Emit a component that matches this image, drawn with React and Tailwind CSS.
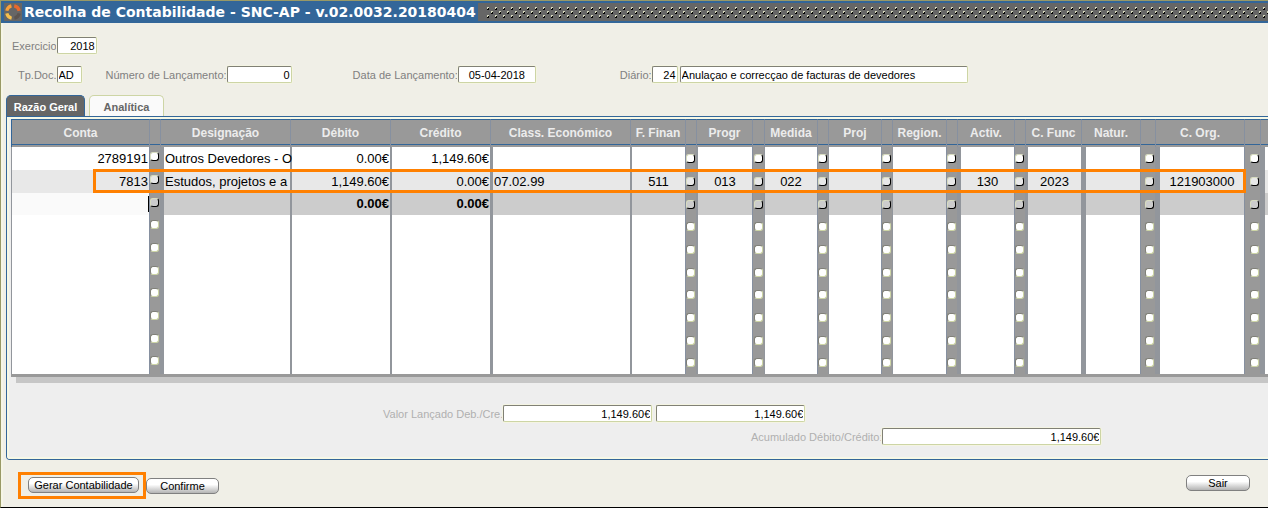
import React from "react";

const inputBase =
  "h-[17px] min-w-0 rounded-[2px] border border-t-[#808075] border-l-[#808075] border-b-[#cdd5a5] border-r-[#cdd5a5] bg-white px-px text-[11px] leading-[15px] text-black outline-none shadow-[0_0_0_1px_#f4f4e2]";

function Field({ label, id, value, className, labelClass = "text-[#808080]" }) {
  return (
    <div className="flex items-center">
      <label htmlFor={id} className={`whitespace-nowrap text-[11px] leading-4 ${labelClass}`}>
        {label}
      </label>
      <input id={id} defaultValue={value} className={`${inputBase} ${className}`} />
    </div>
  );
}

const columns = [
  { key: "conta", title: "Conta", col: "w-[138px]", edge: "border-l", align: "text-right", pick: "w-[11px]", raised: true },
  { key: "desig", title: "Designação", col: "w-[130px]", edge: "border-l-4", align: "text-left" },
  { key: "deb", title: "Débito", col: "w-[100px]", edge: "border-l-2", align: "text-right" },
  { key: "cred", title: "Crédito", col: "w-[100px]", edge: "border-l-2", align: "text-right" },
  { key: "cls", title: "Class. Económico", col: "w-[140px]", edge: "border-l-3", align: "text-left" },
  { key: "fin", title: "F. Finan", col: "w-[55px]", edge: "border-l-2", align: "text-center", pick: "w-[11px]" },
  { key: "progr", title: "Progr", col: "w-[56px]", edge: "border-l-2", align: "text-center", pick: "w-[12px]" },
  { key: "med", title: "Medida", col: "w-[53px]", edge: "border-l", align: "text-center", pick: "w-[11px]" },
  { key: "proj", title: "Proj", col: "w-[53px]", edge: "border-l", align: "text-center", pick: "w-[11px]" },
  { key: "reg", title: "Region.", col: "w-[54px]", edge: "border-l", align: "text-center", pick: "w-[11px]" },
  { key: "act", title: "Activ.", col: "w-[57px]", edge: "border-l-4", align: "text-center", pick: "w-[11px]" },
  { key: "func", title: "C. Func", col: "w-[56px]", edge: "border-l-3", align: "text-center" },
  { key: "nat", title: "Natur.", col: "w-[59px]", edge: "border-l-5", align: "text-center", pick: "w-[15px]" },
  { key: "org", title: "C. Org.", col: "w-[89px]", edge: "border-l-5", align: "text-center", pick: "w-[16px]" },
  { key: "end", title: "", col: "", edge: "border-l-5", align: "text-left" },
];

const rows = [
  { conta: "2789191", desig: "Outros Devedores - O", deb: "0.00€", cred: "1,149.60€" },
  {
    conta: "7813", desig: "Estudos, projetos e a", deb: "1,149.60€", cred: "0.00€", cls: "07.02.99",
    fin: "511", progr: "013", med: "022", act: "130", func: "2023", org: "121903000",
  },
  { deb: "0.00€", cred: "0.00€" },
  {}, {}, {}, {}, {}, {}, {},
];

const rowColors = ["bg-white", "bg-[#e8e8e8]", "bg-[#cccccc]"];

function PickButton({ row, label }) {
  const look =
    row > 2
      ? "border-t-[#808078] border-l-[#808078] border-b-[#cdd5a5] border-r-[#cdd5a5] bg-white"
      : `border-t-[#d8dcc0] border-l-[#d8dcc0] border-b-black border-r-black ${rowColors[row]}`;
  return <button aria-label={label} className={`block size-[9px] rounded-[3px] border ${look}`} />;
}

function LedgerTable() {
  return (
    <table className="w-full min-w-[1257px] table-fixed border-separate border-spacing-0 bg-[#999999]">
      <colgroup>
        {columns.map((c) => (
          <React.Fragment key={c.key}>
            <col className={c.col} />
            {c.pick && <col className={c.pick} />}
          </React.Fragment>
        ))}
      </colgroup>
      <thead>
        <tr className="h-[28px]">
          {columns.map((c, i) => (
            <React.Fragment key={c.key}>
              <th
                className={`h-[28px] overflow-hidden border-t border-t-[#336699] border-l p-0 align-top text-[12px] font-bold text-[#ececec] ${i === 0 ? "border-l-[#336699]" : "border-l-[#8690a0]"}`}
              >
                <div className="h-[25px] border-b border-[#336699] whitespace-nowrap leading-[26px]">{c.title}</div>
              </th>
              {c.pick && (
                <td className="border-t border-t-[#336699] border-l border-l-[#8690a0] p-0 align-top">
                  <div className="h-[25px] border-b border-[#336699]" />
                </td>
              )}
            </React.Fragment>
          ))}
        </tr>
      </thead>
      <tbody>
        {rows.map((r, i) => (
          <tr key={i} className="h-[23px] nth-[3n]:h-[22px]">
            {columns.map((c, j) => {
              const bg = i === 2 && j === 0 ? "bg-[#fafafa]" : rowColors[i] || "bg-white";
              const caret = i === 2 && j === 0;
              return (
                <React.Fragment key={c.key}>
                  <td
                    className={`border-[#92969c] p-0 whitespace-nowrap text-[13px] text-black ${c.edge} ${c.align} ${bg} ${i === 2 ? "font-bold" : ""}`}
                  >
                    <div className={`h-4 px-px leading-4 ${caret ? "border-r border-black" : ""}`}>{r[c.key]}</div>
                  </td>
                  {c.pick && (
                    <td className={`border-l border-[#8690a0] p-0 pr-px ${c.raised ? "pb-1" : ""}`}>
                      <div className="flex justify-end">
                        <PickButton row={i} label={`${c.title} ${i + 1}`} />
                      </div>
                    </td>
                  )}
                </React.Fragment>
              );
            })}
          </tr>
        ))}
      </tbody>
    </table>
  );
}

function ActionButton({ children, className }) {
  return (
    <button
      className={`h-4 rounded-[5px] border border-[#808080] bg-linear-to-b from-white from-40% to-[#b4b4b4] text-[11px] leading-[15px] text-black ${className}`}
    >
      {children}
    </button>
  );
}

function Logo() {
  return (
    <svg viewBox="0 0 18 18" className="size-[18px] shrink-0" aria-hidden="true">
      <rect width="18" height="18" fill="#666666" />
      <g fill="none" strokeWidth="3.2">
        <path d="M2.8 7.8A6.3 6.3 0 0 1 7.4 2.9" stroke="#f7a03a" />
        <path d="M10.2 2.9A6.3 6.3 0 0 1 15.2 7.8" stroke="#e8682c" />
        <path d="M2.8 10.4A6.3 6.3 0 0 0 7.6 15.2" stroke="#f6c04c" />
        <path d="M10.4 15.2A6.3 6.3 0 0 0 15.2 10.4" stroke="#5c5450" />
      </g>
    </svg>
  );
}

export default function App() {
  return (
    <div
      className="flex min-h-[508px] flex-col overflow-hidden border-t border-b border-l border-t-[#999966] border-b-black border-l-[#999966] bg-[#f0efe7]"
      style={{ fontFamily: '"Liberation Sans", Arial, sans-serif' }}
    >
      <header className="flex h-[22px] items-center bg-[#336699] pl-[3px]">
        <Logo />
        <h1
          className="px-0.5 text-[14px] leading-[22px] font-bold whitespace-nowrap text-white"
          style={{ fontFamily: 'Verdana, "DejaVu Sans", sans-serif' }}
        >
          Recolha de Contabilidade - SNC-AP - v.02.0032.20180404
        </h1>
        <div className="h-[18px] flex-1 bg-[#666666] pl-2">
          <svg className="block h-[18px] w-full" aria-hidden="true">
            <defs>
              <pattern id="grip" width="8" height="8" patternUnits="userSpaceOnUse" y="4">
                <path d="M1 0h2v1h-1v1h-1zM5 4h2v1h-1v1h-1z" fill="#d6d8be" />
                <path d="M3 1v2h-2v-1h1v-1zM7 5v2h-2v-1h1v-1z" fill="#000000" />
              </pattern>
            </defs>
            <rect y="4" width="100%" height="11" fill="url(#grip)" />
          </svg>
        </div>
      </header>

      <main className="flex flex-1 flex-col border-l-2 border-[#f6f6e6] pl-[3px]">
        <form className="pt-[14px]">
          <div className="pl-1.5">
            <Field label="Exercicio" id="exercicio" value="2018" className="w-[40px] text-right" />
          </div>
          <div className="flex items-center pt-3 pl-3">
            <Field label="Tp.Doc." id="tpdoc" value="AD" className="w-[25px]" />
            <div className="pl-6">
              <Field label="Número de Lançamento:" id="numero" value="0" className="w-[65px] text-right" />
            </div>
            <div className="pl-[61px]">
              <Field label="Data de Lançamento:" id="data" value="05-04-2018" className="w-[78px] text-center" />
            </div>
            <div className="flex items-center gap-0.5 pl-[84px]">
              <Field label="Diário:" id="diario" value="24" className="w-[26px] text-right" />
              <input
                aria-label="Descrição do diário"
                defaultValue="Anulaçao e correcçao de facturas de devedores"
                className={`${inputBase} w-[288px]`}
              />
            </div>
          </div>
        </form>

        <nav role="tablist" className="flex gap-1 pt-3">
          <button
            role="tab"
            aria-selected="true"
            className="h-[21px] w-[79px] rounded-t-[5px] border border-b-0 border-[#336699] bg-[#666666] text-[11px] leading-[22px] font-bold text-white"
          >
            Razão Geral
          </button>
          <button
            role="tab"
            aria-selected="false"
            className="h-[21px] w-[75px] rounded-t-[5px] border border-b-0 border-[#cdd5a5] bg-[#fafafa] text-[11px] leading-[22px] font-bold text-[#666666]"
          >
            Analítica
          </button>
        </nav>

        <section className="rounded-bl-[4px] border-t border-b border-l border-[#336699] bg-[#eeeeee]">
          <div className="rounded-bl-[3px] border-t-2 border-b-2 border-l-2 border-[#f6f8e6] pl-0.5">
            <div className="relative">
              <LedgerTable />
              <div className="h-[3px] bg-[#999999]" />
              <div className="ml-[5px] h-[6px] bg-[#c6c6c6]" />
              <div className="pointer-events-none absolute top-[50px] left-[82px] h-[24px] w-[1153px] border-3 border-[#ff8000]" />
            </div>
            <div className="flex items-center gap-1 pt-[22px] pl-[372px]">
              <Field label="Valor Lançado Deb./Cre." id="valor-deb" value="1,149.60€" className="w-[149px] text-right" labelClass="text-[#b0b0b0]" />
              <input aria-label="Valor lançado a crédito" defaultValue="1,149.60€" className={`${inputBase} w-[149px] text-right`} />
            </div>
            <div className="flex pt-1.5 pb-3 pl-[740px]">
              <Field label="Acumulado Débito/Crédito:" id="acumulado" value="1,149.60€" className="w-[219px] text-right" labelClass="text-[#b0b0b0]" />
            </div>
          </div>
        </section>

        <footer className="flex items-start justify-between pt-3 pr-[18px] pb-1 pl-3">
          <div className="flex items-center">
            <div className="flex border-3 border-[#ff8000] pt-0.5 pr-1 pb-[3px] pl-[7px]">
              <ActionButton className="w-[111px]">Gerar Contabilidade</ActionButton>
            </div>
            <ActionButton className="w-[73px]">Confirme</ActionButton>
          </div>
          <div className="flex pt-[3px]">
            <ActionButton className="w-[64px]">Sair</ActionButton>
          </div>
        </footer>
      </main>
    </div>
  );
}
